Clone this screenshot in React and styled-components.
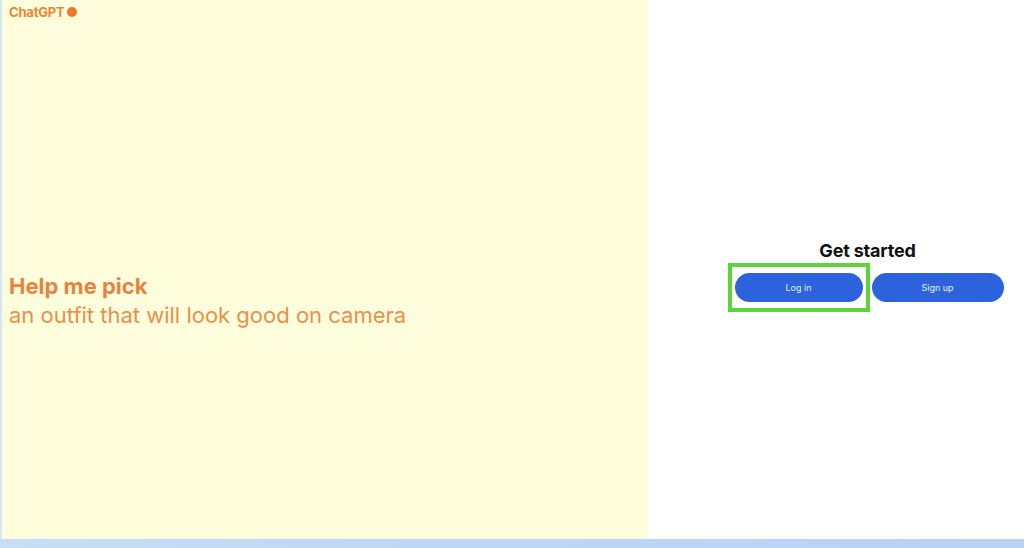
import React from 'react'
import styled, { createGlobalStyle } from 'styled-components'

const GlobalStyle = createGlobalStyle`
    html, body {
        margin: 0;
        padding: 0;
        height: 100%;
        overflow: hidden;
    }
    body {
        font-family: "Inter", "Liberation Sans", Arial, sans-serif;
        background: #c8def6;
    }
    #root {
        height: 100%;
    }
`

const Page = styled.div`
    height: 548px;
    display: flex;
    flex-direction: column;
`

const Screen = styled.div`
    flex: 0 0 539px;
    display: flex;
    border-left: 2px solid #d2e6f4;
    box-sizing: border-box;
`

const BottomBar = styled.div`
    flex: 1;
    background: linear-gradient(90deg, #c6def6, #bcd4f6 60%, #b9d1f5);
`

const LeftPane = styled.div`
    width: 646px;
    background: #fefedc;
    display: flex;
    flex-direction: column;
    padding: 5px 0 0 7px;
    box-sizing: border-box;
`

const Logo = styled.div`
    display: flex;
    align-items: center;
    gap: 3px;
    color: #ec8535;
    font-size: 13px;
    font-weight: 700;
    letter-spacing: -0.2px;
    line-height: 14px;
`

const Dot = styled.span`
    width: 10px;
    height: 10px;
    border-radius: 50%;
    background: #ec7a2a;
`

const Prompt = styled.div`
    margin-top: auto;
    margin-bottom: 209px;
    color: #e8843f;
    font-size: 22px;
    line-height: 29px;
`

const PromptTitle = styled.div`
    font-weight: 700;
`

const PromptLine = styled.div`
    font-weight: 400;
    color: #eb8f4c;
`

const RightPane = styled.div`
    flex: 1;
    background: #ffffff;
    display: flex;
    flex-direction: column;
    align-items: center;
    padding: 240px 0 0 63px;
    box-sizing: border-box;
`

const Heading = styled.h2`
    margin: 0 0 1px;
    font-size: 18px;
    font-weight: 700;
    color: #111;
    line-height: 22px;
    letter-spacing: -0.2px;
`

const Buttons = styled.div`
    display: flex;
    align-items: center;
    gap: 2px;
    margin-left: -4px;
`

const Highlight = styled.div`
    border: 4px solid #5ed43a;
    padding: 6px 3px;
`

const PillButton = styled.button`
    width: ${p => p.$w}px;
    height: 29px;
    border: none;
    border-radius: 15px;
    background: #2c63dc;
    color: #e8eefc;
    font-family: "Inter", "Liberation Sans", Arial, sans-serif;
    font-size: 9px;
    cursor: pointer;
`

export default function App() {
    return (
        <Page>
            <GlobalStyle />
            <Screen>
                <LeftPane>
                    <Logo>ChatGPT<Dot /></Logo>
                    <Prompt>
                        <PromptTitle>Help me pick</PromptTitle>
                        <PromptLine>an outfit that will look good on camera</PromptLine>
                    </Prompt>
                </LeftPane>
                <RightPane>
                    <Heading>Get started</Heading>
                    <Buttons>
                        <Highlight>
                            <PillButton $w={128}>Log in</PillButton>
                        </Highlight>
                        <PillButton $w={132}>Sign up</PillButton>
                    </Buttons>
                </RightPane>
            </Screen>
            <BottomBar />
        </Page>
    )
}
